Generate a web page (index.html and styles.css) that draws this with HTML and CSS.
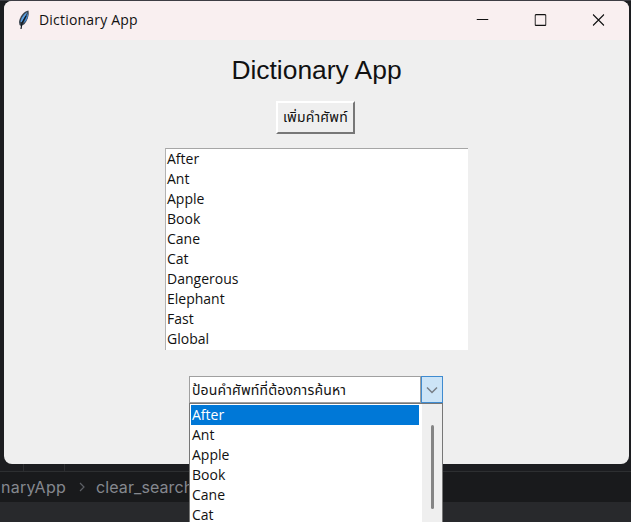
FILE: index.html
```html
<!DOCTYPE html>
<html lang="en">
<head>
<meta charset="utf-8">
<title>Dictionary App</title>
<link rel="stylesheet" href="styles.css">
</head>
<body>
<div class="editor">
  <div class="gutter"></div>
  <div class="breadcrumbs"><span class="crumb-app">naryApp</span><svg class="crumb-arrow" viewBox="0 0 6 10"><path d="M1 1l4 4-4 4"/></svg><span class="crumb-fn">clear_search</span></div>
  <div class="statusbar"></div>
</div>
<main class="window">
  <header class="titlebar">
    <svg class="feather" viewBox="0 0 14 20">
      <path d="M11.500 .5C7 1 2.500 7 2 12l.5 3 1.500 1 3-1.500c3-3 5.500-9 4.500-14z" fill="#39434e"/>
      <path d="M10.500 2C7 4 4 8 3.500 12L5 12z" fill="#5ba2e6"/>
      <path d="M11 3L6.500 13l1.500-1c2-2 3.500-6 3-9z" fill="#4488d0"/>
      <path d="M9 6L5 13 4 19" fill="none" stroke="#101820" stroke-width="1.200"/>
    </svg>
    <span class="caption">Dictionary App</span>
    <div class="controls">
      <svg viewBox="0 0 12 12"><path d="M0 5.500h12"/></svg>
      <svg viewBox="0 0 12 12"><rect x=".6" y=".6" width="10.800" height="10.800" rx="1"/></svg>
      <svg viewBox="0 0 12 12"><path d="M.5.5l11 11M11.500.5l-11 11"/></svg>
    </div>
  </header>
  <section class="content">
    <h1><span>Dictionary App</span></h1>
    <button class="add"><span class="thai">เพิ่มคำศัพท์</span></button>
    <ul class="words list">
      <li>After</li><li>Ant</li><li>Apple</li><li>Book</li><li>Cane</li><li>Cat</li><li>Dangerous</li><li>Elephant</li><li>Fast</li><li>Global</li>
    </ul>
    <div class="combo">
      <div class="field"><span class="thai">ป้อนคำศัพท์ที่ต้องการค้นหา</span></div>
      <div class="toggle"><svg viewBox="0 0 12 8"><path d="M1 1.500l5 5 5-5"/></svg></div>
      <div class="popup">
        <ul class="list options"><li class="selected">After</li><li>Ant</li><li>Apple</li><li>Book</li><li>Cane</li><li>Cat</li></ul>
        <div class="scroll"><div class="thumb"></div></div>
      </div>
    </div>
  </section>
</main>
</body>
</html>
```
FILE: styles.css
```css
* { box-sizing: border-box; }
body { margin: 0; width: 631px; height: 522px; overflow: hidden; position: relative; background: #1c1d20; font-family: "Open Sans", "Noto Sans", sans-serif; color: #111; }
ul { margin: 0; padding: 0; list-style: none; }
.editor { height: 522px; display: flex; flex-direction: column; justify-content: flex-end; border-top: 1px solid #3d3d44; }
.gutter { height: 8px; background: linear-gradient(90deg, transparent 23px, #2d2f32 23px 24px, transparent 24px 64px, #2d2f32 64px 65px, transparent 65px); }
.breadcrumbs { height: 31px; background: #191a1c; border-top: 1px solid #2d2f31; display: flex; align-items: center; color: #85888f; font: 16px/30px Inter, sans-serif; padding-left: 1px; }
.crumb-app { width: 78px; letter-spacing: .25px; }
.crumb-arrow { width: 6px; height: 10px; margin-right: 11px; fill: none; stroke: #5d6066; stroke-width: 1.2; }
.crumb-fn { letter-spacing: .1px; }
.statusbar { height: 20px; background: #28292c; }
.window { position: absolute; left: 4px; top: 1px; width: 625px; height: 463px; background: #efefef; border-radius: 8px; }
.titlebar { height: 39px; background: #f9eff0; border-radius: 8px 8px 0 0; display: flex; align-items: center; padding: 0 24px 2px 13px; }
.feather { width: 14px; height: 20px; margin-right: 8px; }
.caption { font-size: 14px; line-height: 20px; letter-spacing: .2px; white-space: nowrap; }
.controls { margin-left: auto; display: flex; gap: 46px; transform: translateX(-.5px); }
.controls svg { width: 12px; height: 12px; fill: none; stroke: #111; stroke-width: 1.1; display: block; }
.content { display: flex; flex-direction: column; align-items: center; }
h1 { margin: 14px 0 0; height: 47px; font: 26.4px/32px "Liberation Sans", Arial, sans-serif; white-space: nowrap; }
.thai { white-space: nowrap; font-family: "Noto Sans Thai", "Loma", "Liberation Sans", sans-serif; }
.add { width: 79px; height: 33px; margin: 0 2px 0 0; padding: 0; border: 2px solid; border-color: #fff #777 #777 #fff; background: #efefef; color: #111; display: flex; align-items: center; justify-content: center; font-size: 14px; letter-spacing: .2px; }
.list { font-size: 14px; line-height: 20px; letter-spacing: 0; }
.words { width: 303px; height: 202px; margin: 14px 0 26px; background: #fff; border-top: 1px solid #a6a6a6; border-left: 1px solid #b3b3b3; padding-left: 1px; }
.list li { height: 20px; }
.combo { position: relative; width: 254px; height: 27px; display: flex; margin-right: 1px; }
.field { flex: 1; background: #fff; border: 1px solid #a0a0a0; padding-left: 2px; font-size: 14px; letter-spacing: .15px; line-height: 26px; }
.toggle { width: 22px; border: 1px solid #3f8bd0; background: #cce4f7; display: flex; align-items: center; justify-content: center; }
.toggle svg { width: 12px; height: 8px; fill: none; stroke: #777e86; stroke-width: 1.5; }
.popup { position: absolute; left: 0; top: 27px; width: 254px; height: 120px; display: flex; background: #fff; border: 1px solid #777; border-bottom: 0; }
.options { flex: 1; padding: 1px 3px 0 1px; }
.options li { padding-left: 1px; }
.selected { background: #0078d7; color: #fff; }
.scroll { width: 20px; background: #efefef; display: flex; justify-content: center; padding-top: 21px; }
.thumb { width: 3px; height: 84px; background: #858585; border-radius: 2px; }
```
